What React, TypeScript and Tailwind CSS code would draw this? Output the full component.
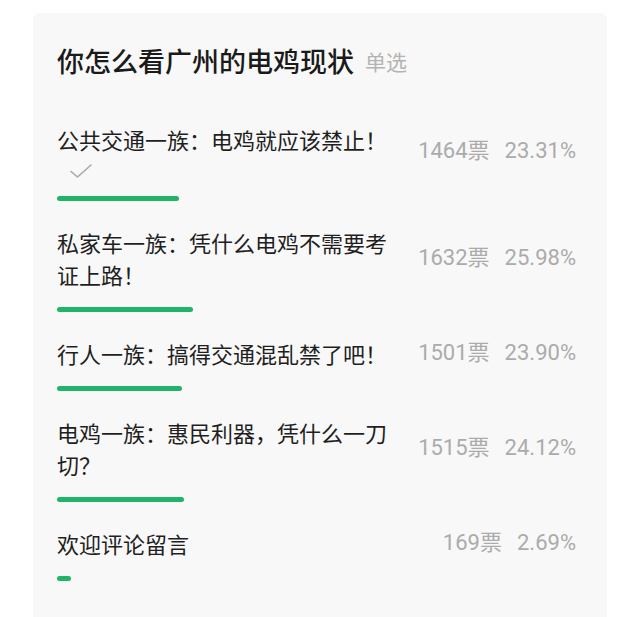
type PollOption = {
  label: string;
  votes: number;
  percent: string;
  checked?: boolean;
};

const options: PollOption[] = [
  { label: "公共交通一族：电鸡就应该禁止！", votes: 1464, percent: "23.31", checked: true },
  { label: "私家车一族：凭什么电鸡不需要考证上路！", votes: 1632, percent: "25.98" },
  { label: "行人一族：搞得交通混乱禁了吧！", votes: 1501, percent: "23.90" },
  { label: "电鸡一族：惠民利器，凭什么一刀切？", votes: 1515, percent: "24.12" },
  { label: "欢迎评论留言", votes: 169, percent: "2.69" },
];

const BAR_MAX = 525;

function CheckMark() {
  return (
    <svg className="h-[14px] w-[22px]" fill="none" viewBox="0 0 22 14">
      <path
        d="M1 7.5 L7.5 13 L21 1"
        stroke="#a8a8a8"
        strokeLinecap="round"
        strokeLinejoin="round"
        strokeWidth="1.6"
      />
    </svg>
  );
}

function OptionRow({ option }: { option: PollOption }) {
  return (
    <div className="flex flex-col">
      <div className="flex items-center justify-between">
        <div className="w-[340px]">
          <p className="text-[22px] leading-[32px] text-[#1f1f1f]">{option.label}</p>
          {option.checked && (
            <div className="flex h-[24px] items-center pl-[13px] pt-[8px]">
              <CheckMark />
            </div>
          )}
        </div>
        <div className="flex gap-[15px] pr-[7px] font-['Roboto','Noto_Sans_CJK_SC',sans-serif] text-[22px] leading-[32px] text-[#ababab]">
          <span>{option.votes}票</span>
          <span>{option.percent}%</span>
        </div>
      </div>
      <div
        className="mt-[17px] h-[5px] rounded-full bg-[#1fb46a]"
        style={{ width: `${(parseFloat(option.percent) / 100) * BAR_MAX}px` }}
      />
    </div>
  );
}

export default function App() {
  return (
    <div className="bg-white px-[33px] pt-[13px] font-['Noto_Sans_CJK_SC',sans-serif]">
      <div className="h-[604px] rounded-t-[6px] bg-[#f8f8f8] px-[24px] pt-[30px]">
        <div className="flex items-center gap-[11px]">
          <h1 className="text-[27px] font-medium leading-[36px] text-[#1a1a1a]">
            你怎么看广州的电鸡现状
          </h1>
          <span className="text-[21px] leading-[36px] text-[#b3b3b3]">单选</span>
        </div>
        <div className="mt-[44px] flex flex-col gap-[25px]">
          {options.map((option) => (
            <OptionRow key={option.label} option={option} />
          ))}
        </div>
      </div>
    </div>
  );
}
